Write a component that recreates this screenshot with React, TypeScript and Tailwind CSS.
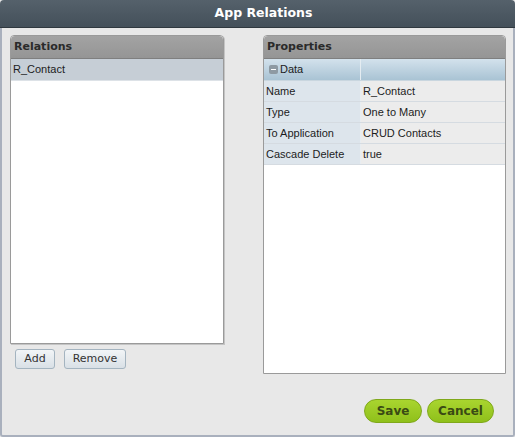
const rows = [
  ["Name", "R_Contact"],
  ["Type", "One to Many"],
  ["To Application", "CRUD Contacts"],
  ["Cascade Delete", "true"],
];

function PanelHeader({ title }: { title: string }) {
  return (
    <div className="h-[23px] shrink-0 rounded-t-[4px] bg-gradient-to-b from-[#a3a3a3] to-[#959595] border-b border-[#7f7f7f] px-[3px] flex items-center font-['DejaVu_Sans'] text-[11px] font-bold text-[#2a2a2a]">
      {title}
    </div>
  );
}

export default function App() {
  return (
    <div className="w-[515px] h-[437px] flex flex-col bg-[#e8e8e8] font-['Liberation_Sans'] text-[11px]">
      <div className="h-[28px] shrink-0 rounded-t-[4px] bg-gradient-to-b from-[#55616b] to-[#44505a] border-b border-[#2f383f] flex items-center justify-center pl-[12px] font-['DejaVu_Sans'] text-[12.5px] font-bold text-white">
        App Relations
      </div>
      <div className="flex-1 flex flex-col border-x-2 border-b-2 border-[#a9b0bd] rounded-b-[3px] pt-[7px] pl-[8px] pr-[7px]">
        <div className="flex gap-[39px]">
          <div className="w-[214px] flex flex-col">
            <div className="h-[309px] flex flex-col rounded-t-[4px] border border-[#9a9a9a] bg-white shadow-[1px_1px_0_#c4c4c4]">
              <PanelHeader title="Relations" />
              <div className="h-[22px] bg-[#c6ced6] border-b border-[#dde2e7] px-[2px] flex items-center font-['Liberation_Sans'] text-[11px] text-[#1c1c1c]">
                R_Contact
              </div>
            </div>
            <div className="flex gap-[9px] mt-[5px] pl-[5px] font-['DejaVu_Sans'] text-[11px] text-[#333]">
              <button className="w-[40px] h-[20px] rounded-[3px] border border-[#a4b4c0] bg-gradient-to-b from-[#f2f5f7] to-[#d9e0e6]">
                Add
              </button>
              <button className="w-[62px] h-[20px] rounded-[3px] border border-[#a4b4c0] bg-gradient-to-b from-[#f2f5f7] to-[#d9e0e6]">
                Remove
              </button>
            </div>
          </div>
          <div className="w-[243px] h-[339px] flex flex-col rounded-t-[4px] border border-[#9a9a9a] bg-white">
            <PanelHeader title="Properties" />
            <div className="h-[22px] flex bg-gradient-to-b from-[#d3e2ec] to-[#a9c3d4] border-b border-[#c9d6df] font-['Liberation_Sans'] text-[11px] text-[#1c1c1c]">
              <div className="w-[97px] flex items-center gap-[2px] pl-[5px] border-r border-[#e4ecf1]">
                <span className="w-[9px] h-[9px] rounded-[2px] bg-[#8e9aa3] flex items-center justify-center">
                  <span className="w-[5px] h-[1px] bg-white" />
                </span>
                Data
              </div>
            </div>
            {rows.map(([k, v]) => (
              <div key={k} className="h-[21px] flex border-b border-[#d5dbe1] font-['Liberation_Sans'] text-[11px] text-[#1c1c1c]">
                <div className="w-[97px] bg-[#dde5ec] pl-[2px] flex items-center border-r border-[#e8edf1]">{k}</div>
                <div className="flex-1 bg-[#ececec] pl-[2px] flex items-center">{v}</div>
              </div>
            ))}
          </div>
        </div>
        <div className="flex justify-end gap-[5px] mt-[25px] pr-[12px] font-['DejaVu_Sans'] text-[12px] font-bold text-[#3a4a14]">
          <button className="w-[58px] h-[24px] rounded-full border border-[#7fa81a] bg-gradient-to-b from-[#a9d52f] to-[#8fc01a]">
            Save
          </button>
          <button className="w-[67px] h-[24px] rounded-full border border-[#7fa81a] bg-gradient-to-b from-[#a9d52f] to-[#8fc01a]">
            Cancel
          </button>
        </div>
      </div>
    </div>
  );
}
